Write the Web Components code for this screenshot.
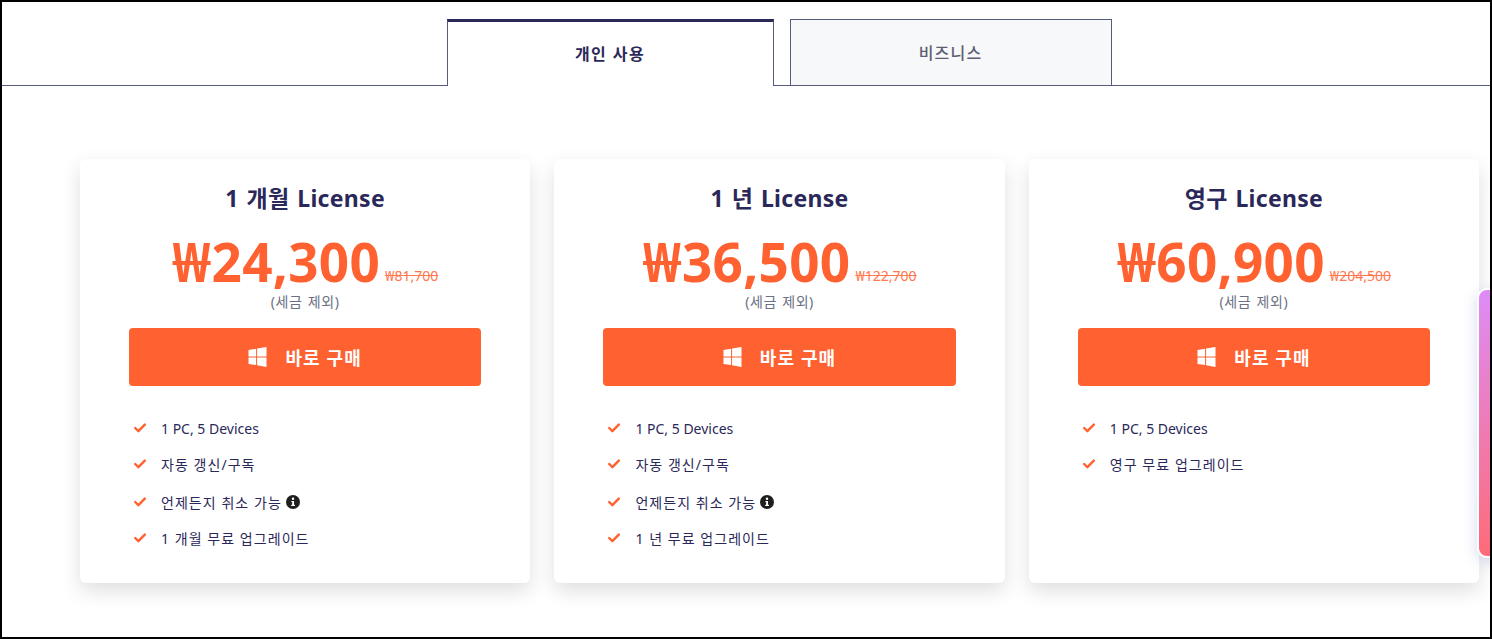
<!DOCTYPE html>
<html lang="ko"><head><meta charset="utf-8"><style>
html,body{margin:0;padding:0;background:#fff}
body{font-family:"Noto Sans","Noto Sans CJK KR",sans-serif}
</style></head><body>
<template id="t-page"><style>
:host{display:block;box-sizing:border-box;width:1492px;height:639px;border:2px solid #000;position:relative;overflow:hidden;background:#fff}
.tabs{display:flex;justify-content:center;height:84px;padding-top:17px;box-sizing:border-box;border-bottom:1px solid #555b7b}
.inner{display:flex;gap:16px;margin-left:66px}
.cards{display:flex;gap:24.1px;margin:73px 0 0 78px}
.side{position:absolute;left:1475px;top:286px;width:40px;height:270px;box-sizing:border-box;border:2px solid #fff;border-radius:10px;background:linear-gradient(180deg,#dd8cf7,#ff6b78);box-shadow:0 4px 14px rgba(90,110,200,.25)}
</style>
<div class="tabs"><div class="inner"><slot name="tabs"></slot></div></div>
<div class="cards"><slot></slot></div>
<div class="side"></div></template>

<template id="t-tab"><style>
:host{display:flex;align-items:center;justify-content:center;box-sizing:border-box;height:66px;padding-bottom:2px;font-size:16px;font-weight:500;letter-spacing:1.2px;color:#5b5f70;background:#f7f8fa;border:1px solid #555b7b;border-bottom:0;width:322px}
:host([active]){width:327px;background:#fff;color:#2a2859;border-top:3px solid #2a2859;font-weight:700;height:67px;margin-bottom:-1px;letter-spacing:1.4px}
</style><slot></slot></template>

<template id="t-card"><style>
:host{display:block;box-sizing:border-box;width:450.3px;height:424px;background:#fff;border-radius:6px;box-shadow:0 8px 20px rgba(0,0,0,.13);padding:21px 49px 0;text-align:center}
h2{margin:0;font-size:23px;line-height:36px;font-weight:700;color:#2a2859;letter-spacing:.3px;word-spacing:1.5px}
.price{display:flex;justify-content:center;align-items:baseline;gap:5px;height:62px;margin-top:15px;line-height:62px}
.now{font-size:53px;font-weight:700;color:#ff6130;letter-spacing:.3px}
.old{font-size:14px;color:#ff6130;text-decoration:line-through;opacity:.85;position:relative;top:-1px}
.tax{font-size:14px;line-height:20px;color:#6b7084;margin-top:-1px;letter-spacing:.6px;word-spacing:1px}
button{all:unset;box-sizing:border-box;display:flex;align-items:center;justify-content:center;gap:18px;width:100%;height:58px;margin-top:16px;background:#ff6130;border-radius:4px;color:#fff;font-size:18px;font-weight:700;letter-spacing:1.1px}
svg{display:block}
ul{list-style:none;margin:24px 0 0 5px;padding:0;text-align:left}
</style>
<h2><slot name="title"></slot></h2>
<div class="price"><span class="now"><slot name="now"></slot></span><span class="old"><slot name="old"></slot></span></div>
<div class="tax">(세금 제외)</div>
<button type="button"><svg width="19" height="20" viewBox="0 0 18 20"><path fill="#fff" d="M0 3 7.6 1.8V9.4H0ZM8.6 1.6 18 0V9.4H8.6ZM0 10.5H7.6V18L0 16.9ZM8.6 10.5H18V20L8.6 18.3Z"/></svg><span>바로 구매</span></button>
<ul><slot name="features"></slot></ul></template>

<template id="t-feature"><style>
:host{display:flex;align-items:center;box-sizing:border-box;height:36px;font-size:14px;color:#2a2859;letter-spacing:1.05px}
:host([latin]){letter-spacing:0}
:host([info]){height:38px;padding-top:2px}
svg.c{flex:none;margin-right:15px}
svg.i{display:none;margin-left:4px;flex:none}
:host([info]) svg.i{display:block}
</style><svg class="c" width="12" height="10" viewBox="0 0 12 10"><path d="M1.2 5 4.4 8.2 10.8 1.6" fill="none" stroke="#ff6130" stroke-width="2.4" stroke-linecap="round" stroke-linejoin="round"/></svg><slot></slot><svg class="i" width="14" height="14" viewBox="0 0 14 14"><circle cx="7" cy="7" r="7" fill="#1f1f1f"/><circle cx="7" cy="3.8" r="1.2" fill="#fff"/><path d="M5.4 6H8V9.8H9V11H5.2V9.8H6.2V7.2H5.4Z" fill="#fff"/></svg></template>

<x-page>
<x-tab slot="tabs" active>개인 사용</x-tab>
<x-tab slot="tabs">비즈니스</x-tab>
<x-card>
<span slot="title">1 개월 License</span><span slot="now">₩24,300</span><span slot="old">₩81,700</span>
<x-feature slot="features" latin>1 PC, 5 Devices</x-feature><x-feature slot="features">자동 갱신/구독</x-feature><x-feature slot="features" info>언제든지 취소 가능</x-feature><x-feature slot="features">1 개월 무료 업그레이드</x-feature>
</x-card>
<x-card>
<span slot="title">1 년 License</span><span slot="now">₩36,500</span><span slot="old">₩122,700</span>
<x-feature slot="features" latin>1 PC, 5 Devices</x-feature><x-feature slot="features">자동 갱신/구독</x-feature><x-feature slot="features" info>언제든지 취소 가능</x-feature><x-feature slot="features">1 년 무료 업그레이드</x-feature>
</x-card>
<x-card>
<span slot="title">영구 License</span><span slot="now">₩60,900</span><span slot="old">₩204,500</span>
<x-feature slot="features" latin>1 PC, 5 Devices</x-feature><x-feature slot="features">영구 무료 업그레이드</x-feature>
</x-card>
</x-page>
<script>
function def(name,tid){customElements.define(name,class extends HTMLElement{constructor(){super();this.attachShadow({mode:'open'}).appendChild(document.getElementById(tid).content.cloneNode(true));}});}
def('x-page','t-page');def('x-tab','t-tab');def('x-card','t-card');def('x-feature','t-feature');
</script>
</body></html>
